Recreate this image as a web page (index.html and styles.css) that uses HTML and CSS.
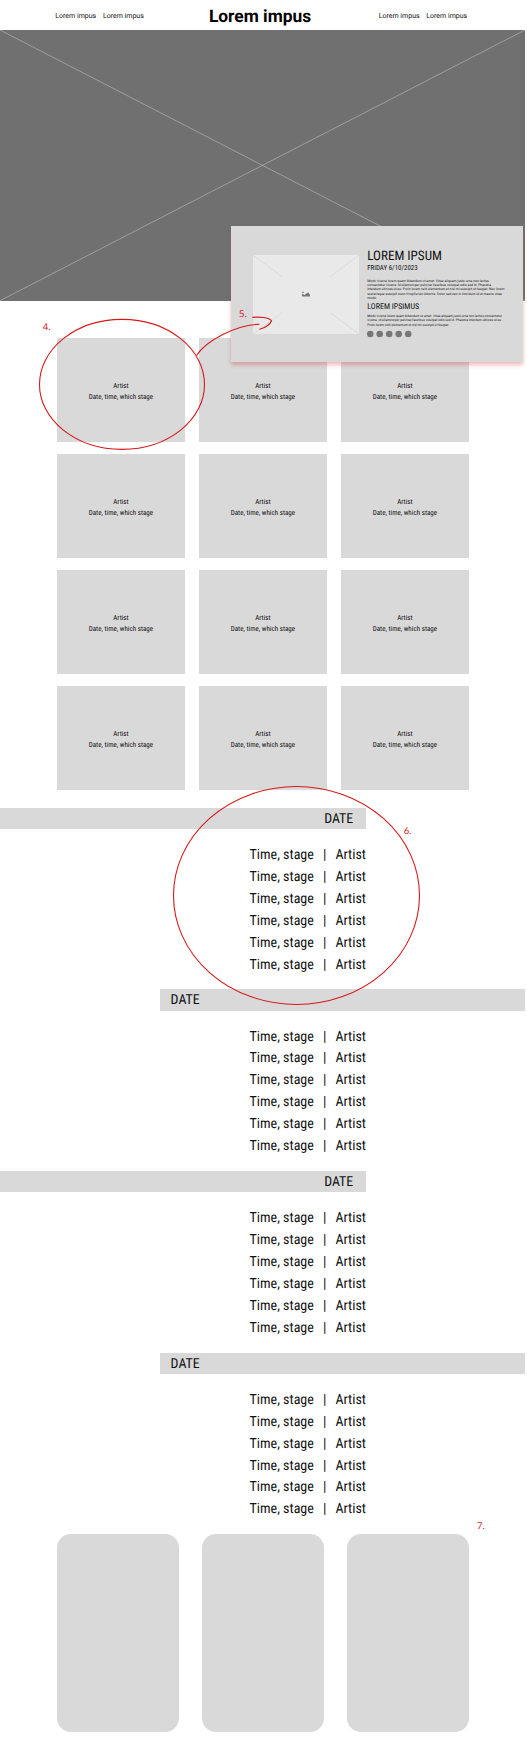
FILE: index.html
```html
<!DOCTYPE html>
<html lang="en">
<head>
<meta charset="utf-8">
<title>Lorem impus</title>
<link rel="stylesheet" href="styles.css">
</head>
<body>
<div class="page">
  <header class="header">
    <nav class="nav"><a>Lorem impus</a><a>Lorem impus</a></nav>
    <h1 class="brand">Lorem impus</h1>
    <nav class="nav"><a>Lorem impus</a><a>Lorem impus</a></nav>
  </header>
  <section class="hero">
    <svg class="cross" viewBox="0 0 525 271" preserveAspectRatio="none"><path d="M0 0L525 271M525 0L0 271" stroke="#a9a9a9" stroke-width=".8"/></svg>
  </section>
  <main>
    <section class="artists" id="artists"></section>
    <section class="schedule" id="schedule"></section>
    <section class="tiles"><div class="tile"></div><div class="tile"></div><div class="tile"></div></section>
  </main>

  <aside class="popup">
    <svg class="photo" viewBox="0 0 106 79">
      <rect x=".4" y=".4" width="105.2" height="78.2" fill="#e9e9e9" stroke="#f0f0f0" stroke-width=".5"/>
      <path d="M0 0L29.500 22M106 0L77 22M0 79L29.500 57.500M106 79L77 57.500" stroke="#d6d6d6" stroke-width=".7"/>
      <path d="M49 41.500V38.800L51.500 40L54 38L55.500 37.500L57 40V41.500ZM49 36.800H50.800V37.800H49Z" fill="#777"/>
    </svg>
    <div class="info">
      <h2 class="info-title">LOREM IPSUM</h2>
      <p class="info-date">FRIDAY 6/10/2023</p>
      <p class="copy">Morbi viverra lorem quam bibendum ut amet. Vitae aliquam justo urna non lectus<br>consectetur viverra. Id ullamcorper pulvinar faucibus volutpat odio sed id. Pharetra<br>interdum ultrices ut eu. Proin lorem velit elementum et nisl mi suscipit ut feugiat. Nec lorem<br>scelerisque suscipit nunc fringilla leo lobortis. Dolor sed nec in tincidunt id ut mauris vitae<br>morbi.</p>
      <h3 class="info-sub">LOREM IPSIMUS</h3>
      <p class="copy copy-narrow">Morbi viverra lorem quam bibendum ut amet. Vitae aliquam justo urna non lectus consectetur<br>viverra. Id ullamcorper pulvinar faucibus volutpat odio sed id. Pharetra interdum ultrices ut eu.<br>Proin lorem velit elementum et nisl mi suscipit ut feugiat.</p>
      <svg class="dots" viewBox="0 0 46 8" fill="#777"><circle cx="3.200" cy="4" r="3.300"/><circle cx="12.700" cy="4" r="3.300"/><circle cx="22.200" cy="4" r="3.300"/><circle cx="31.700" cy="4" r="3.300"/><circle cx="41.200" cy="4" r="3.300"/></svg>
    </div>
  </aside>

  <svg class="notes" viewBox="0 0 527 1747">
    <g fill="none" stroke="#d71919" stroke-width="1.1">
      <ellipse cx="122" cy="384.400" rx="82.500" ry="65"/>
      <ellipse cx="296.500" cy="895.500" rx="123" ry="109"/>
      <path d="M196.500 355.500C206 341 236 324.500 259.500 324.300M252.300 317.400C259 316.600 269 317.500 271.500 320.700C270 325 264 328 259.500 329.300"/>
    </g>
    <g class="note-text">
      <text class="note-sans" x="42.800" y="330">4.</text>
      <text class="note-sans" x="239" y="317.400">5.</text>
      <text x="403.800" y="834">6.</text>
      <text x="477" y="1529">7.</text>
    </g>
  </svg>
</div>
<script src="page.js"></script>
</body>
</html>
```
FILE: page.js
```javascript
const card = '<article class="card"><p>Artist</p><p>Date, time, which stage</p></article>';
document.getElementById('artists').innerHTML = card.repeat(12);

const row = '<li><span>Time, stage</span><span>|</span><span>Artist</span></li>';
const day = side => `<div class="day"><h2 class="date ${side}">DATE</h2><ul class="slots">${row.repeat(6)}</ul></div>`;
document.getElementById('schedule').innerHTML = ['from-left', 'from-right', 'from-left', 'from-right'].map(day).join('');
```
FILE: styles.css
```css
* { box-sizing: border-box; margin: 0; padding: 0; }
body { background: #fff; color: #111; font-family: Roboto, sans-serif; text-rendering: geometricPrecision; }
.page { position: relative; width: 527px; height: 1747px; overflow: hidden; }

.header { width: 525px; height: 30.300px; padding: 2px 57.800px 0 55.300px; display: flex; align-items: center; justify-content: space-between; }
.nav { display: flex; gap: 6.700px; font-size: 7px; white-space: nowrap; }
.brand { font-size: 17.400px; line-height: 20px; font-weight: 700; color: #000; transform: translate(-1.200px, .5px); }

.hero { width: 525px; height: 270.700px; background: #707070; }
.cross { display: block; width: 100%; height: 100%; }

.artists { margin: 37.500px 0 0 56.800px; display: grid; grid-template-columns: repeat(3, 128.300px); grid-auto-rows: 104px; gap: 12px 13.700px; font-family: "Roboto Condensed", Roboto, sans-serif; font-size: 7.050px; line-height: 11px; text-align: center; }
.card { background: #d9d9d9; display: flex; flex-direction: column; justify-content: center; padding-top: 1px; }

.schedule { margin-top: 17.300px; font-family: "Roboto Condensed", Roboto, sans-serif; font-size: 14px; }
.day { height: 181.600px; }
.date { height: 21.200px; line-height: 22px; font-size: 13.900px; font-weight: 400; background: #d9d9d9; }
.from-left { width: 366px; padding-right: 12.800px; text-align: right; }
.from-right { width: 365px; margin-left: 160px; padding-left: 10.600px; }
.slots { list-style: none; width: 366px; padding-top: 16px; line-height: 21.920px; }
.slots li { display: flex; justify-content: flex-end; gap: 9.100px; }

.tiles { display: flex; gap: 23.100px; margin: -.3px 0 0 57.200px; }
.tile { width: 121.800px; height: 198px; border-radius: 14px; background: #d9d9d9; }

.popup { position: absolute; left: 231px; top: 226px; width: 292px; height: 136px; background: #d9d9d9; box-shadow: 0 3px 4px rgba(205, 60, 60, .35); display: flex; padding: 23px 0 0 22px; }
.photo { flex: none; width: 106px; height: 79px; margin-top: 5.600px; }
.info { margin-left: 8.300px; white-space: nowrap; font-family: "Roboto Condensed", Roboto, sans-serif; }
.info-title { font-size: 13.100px; line-height: 15px; font-weight: 400; }
.info-date { font-size: 6.900px; line-height: 9px; }
.copy { margin-top: 5.800px; font-family: Roboto, sans-serif; font-size: 3.400px; line-height: 4.260px; }
.info-sub { margin-top: 2.200px; font-size: 8px; line-height: 10px; font-weight: 400; }
.copy-narrow { margin-top: 1.700px; font-size: 3.250px; }
.dots { display: block; width: 46px; height: 8px; margin-top: 2.800px; }

.notes { position: absolute; left: 0; top: 0; width: 527px; height: 1747px; }
.note-text { fill: #d71919; font: 9.500px Lato, sans-serif; }
.note-sans { font: 9.500px "Noto Sans", sans-serif; }
```
